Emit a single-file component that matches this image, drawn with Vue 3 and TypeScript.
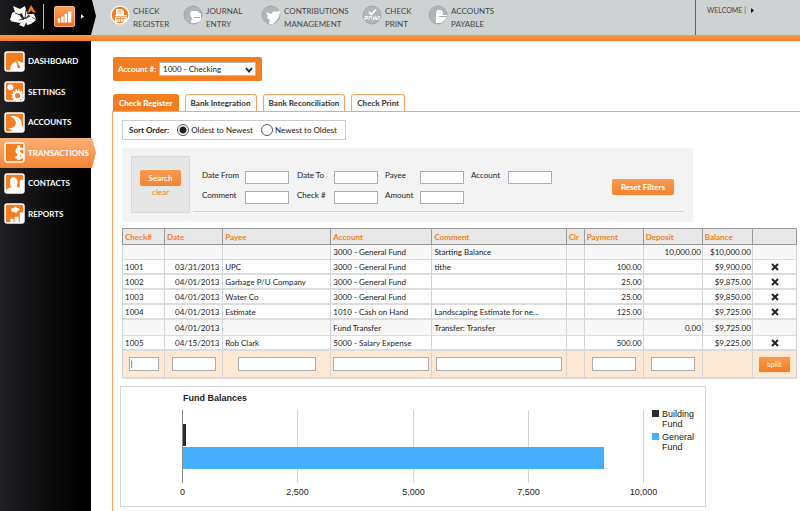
<script setup lang="ts">
import { ref } from 'vue'

interface Row {
  check: string
  date: string
  payee: string
  account: string
  comment: string
  payment: string
  deposit: string
  balance: string
  removable: boolean
}

const topNav: { icon: string; lines: [string, string] }[] = [
  { icon: 'register', lines: ['CHECK', 'REGISTER'] },
  { icon: 'journal', lines: ['JOURNAL', 'ENTRY'] },
  { icon: 'dove', lines: ['CONTRIBUTIONS', 'MANAGEMENT'] },
  { icon: 'print', lines: ['CHECK', 'PRINT'] },
  { icon: 'payable', lines: ['ACCOUNTS', 'PAYABLE'] },
]

const sideNav = [
  { icon: 'gauge', label: 'DASHBOARD' },
  { icon: 'gear', label: 'SETTINGS' },
  { icon: 'wrench', label: 'ACCOUNTS' },
  { icon: 'dollar', label: 'TRANSACTIONS' },
  { icon: 'people', label: 'CONTACTS' },
  { icon: 'reports', label: 'REPORTS' },
]

const tabs = ['Check Register', 'Bank Integration', 'Bank Reconciliation', 'Check Print']
const filters = ['Date From', 'Date To', 'Payee', 'Account', 'Comment', 'Check #', 'Amount']
const sortOrder = ref('oldest')

const columns = [
  { label: 'Check#', width: 43, field: 'w30' },
  { label: 'Date', width: 58, field: 'w43' },
  { label: 'Payee', width: 108, field: 'w77' },
  { label: 'Account', width: 101, field: 'w95' },
  { label: 'Comment', width: 134, field: 'w126' },
  { label: 'Clr', width: 18, field: '' },
  { label: 'Payment', width: 59, field: 'w43' },
  { label: 'Deposit', width: 59, field: 'w43' },
  { label: 'Balance', width: 50, field: '' },
]

function row(check: string, date: string, payee: string, account: string, comment: string, payment: string, deposit: string, balance: string): Row {
  return { check, date, payee, account, comment, payment, deposit, balance, removable: check !== '' }
}

const rows: Row[] = [
  row('', '', '', '3000 - General Fund', 'Starting Balance', '', '10,000.00', '$10,000.00'),
  row('1001', '03/31/2013', 'UPC', '3000 - General Fund', 'tithe', '100.00', '', '$9,900.00'),
  row('1002', '04/01/2013', 'Garbage P/U Company', '3000 - General Fund', '', '25.00', '', '$9,875.00'),
  row('1003', '04/01/2013', 'Water Co', '3000 - General Fund', '', '25.00', '', '$9,850.00'),
  row('1004', '04/01/2013', 'Estimate', '1010 - Cash on Hand', 'Landscaping Estimate for ne...', '125.00', '', '$9,725.00'),
  row('', '04/01/2013', '', 'Fund Transfer', 'Transfer: Transfer', '', '0.00', '$9,725.00'),
  row('1005', '04/15/2013', 'Rob Clark', '5000 - Salary Expense', '', '500.00', '', '$9,225.00'),
]

const ticks = [0, 2500, 5000, 7500, 10000]
const tickX = (v: number) => Math.round(62 + (v / 10000) * 461) + 0.5
</script>

<template>
  <div class="page">
    <header class="top">
      <div class="brand">
        <svg class="logo" viewBox="0 0 28 24" aria-label="Logo">
          <path d="M4 2l7 3 5-3 1 4-6 4-5-2zM3 9l4-2 4 4-1 4-5 2-4-1zM1 17l7-2 3-4 4 5-4 3zM10 21l5-6 4-1-4 9zM16 14l5-2 6 4-5 4-4 1zM18 10l7 0 2 5-6-3zM12 8l5-2 2 6-4 2z" fill="#fff" />
          <path d="M6 9l5 2 3 5M17 6l-1 9 5-3M10 16l5-1" fill="none" stroke="#111" stroke-width=".8" />
          <path d="M18 9l4-8 5 8-3-1-2-2-1 2z" fill="#f47d20" />
        </svg>
        <span class="brand-line"></span>
        <button class="chart-btn" aria-label="Charts">
          <svg viewBox="0 0 20 20">
            <path d="M2 12h3v5H2zM6 10h3v7H6zM10 7h3v10h-3zM14 4h4v13h-4z" fill="#fff" />
          </svg>
        </button>
        <svg class="brand-arrow" viewBox="0 0 4 6"><path d="M0 0l4 3-4 3z" fill="#fff" /></svg>
      </div>
      <nav class="top-nav">
        <a v-for="n in topNav" :key="n.icon" href="#">
          <svg viewBox="0 0 20 20">
            <template v-if="n.icon === 'register'">
              <circle cx="10" cy="10" r="9.5" fill="#fff" />
              <circle cx="10" cy="10" r="8.3" fill="#f47d20" />
              <path d="M6 10V4h5l3 2v4h3v7H5v-7z" fill="#fff" />
              <path d="M7.500 6h4M7.500 8h5M5 11.500h12M6 13.500h10M8 12v5M10.500 12v5M13 12v5" stroke="#f47d20" stroke-width=".7" />
            </template>
            <template v-else>
              <circle cx="10" cy="10" r="9" fill="#b2b5b6" stroke="#a4a7a9" />
              <template v-if="n.icon === 'journal'">
                <path d="M8 6h6l4 3v6a9 9 0 0 1-6 3H8l1-5-2-3z" fill="#fff" />
                <path d="M11 12.500h6" stroke="#aaa" />
              </template>
              <path v-if="n.icon === 'dove'" d="M5 7l5 2 3-3 2 1 4-1-1 6-3 4-3 3H8l1-4-3-2 1-2z" fill="#fff" />
              <template v-if="n.icon === 'print'">
                <path d="M7 7l2.500 2.500L14 4.500" stroke="#fff" stroke-width="1.800" fill="none" />
                <path d="M3 15v-3.500h2.500v2H3M7 15v-3.500h2.500v2L10 15M11.500 11.500V15M13 15v-3.500l2 3.500v-3.500M16 11.500h2M17 11.500V15" stroke="#fff" fill="none" stroke-width=".9" />
              </template>
              <template v-if="n.icon === 'payable'">
                <path d="M9 5h4l2 2v3h4l-1 4-5 4H8V9z" fill="#fff" />
                <path d="M11 11.500h8" stroke="#aaa" />
              </template>
            </template>
          </svg>
          <span>{{ n.lines[0] }}<br />{{ n.lines[1] }}</span>
        </a>
      </nav>
      <div class="welcome">WELCOME | <svg viewBox="0 0 3 5"><path d="M0 0l3 2.500L0 5z" /></svg></div>
    </header>

    <div class="body">
      <aside>
        <ul>
          <li v-for="s in sideNav" :key="s.label">
            <a href="#" :class="{ active: s.icon === 'dollar' }">
              <svg viewBox="0 0 20 20">
                <rect x="1" y="1" width="18" height="18" rx="2" fill="#f47d20" />
                <template v-if="s.icon === 'gauge'">
                  <path d="M6 19c-1-6 4-10 9-9l4 2v7z" fill="#fff" />
                  <path d="M12 10l2 5" stroke="#f47d20" stroke-width="1.500" />
                  <circle cx="14" cy="15" r="1.500" fill="#f47d20" />
                </template>
                <template v-if="s.icon === 'gear'">
                  <circle cx="6" cy="6" r="2.800" fill="#fff" />
                  <circle cx="13" cy="14" r="5" fill="none" stroke="#fff" stroke-width="2" stroke-dasharray="1.500 1.100" />
                  <circle cx="13" cy="14" r="3.500" fill="none" stroke="#fff" stroke-width="2" />
                </template>
                <path v-if="s.icon === 'wrench'" d="M6 4c6-1 11 2 11 8l2 7H9l-5-4c3 1 6 0 7-3s-1-6-5-8z" fill="#fff" />
                <path v-if="s.icon === 'dollar'" d="M18 7c-6-3-8 3-3 4s3 6-4 3M14 3v14" stroke="#fff" stroke-width="2.600" fill="none" />
                <path v-if="s.icon === 'people'" d="M2 19v-3l5-3c-2-3-2-9 2-9s5 5 3 9l3 1V8c0-2 3-2 4-1v12z" fill="#fff" />
                <path v-if="s.icon === 'reports'" d="M6 19v-4h3v4zM10 19v-6h4v6zM15 19V9h4v10zM7 8V5h3V3l5 3-4 4V9z" fill="#fff" />
                <rect x="1" y="1" width="18" height="18" rx="2" fill="none" stroke="#fff" stroke-width="1.500" />
              </svg>
              {{ s.label }}
            </a>
          </li>
        </ul>
      </aside>

      <main>
        <div class="account">
          <label for="account">Account #:</label>
          <span class="select">
            <select id="account"><option>1000 - Checking</option></select>
            <svg viewBox="0 0 8 6"><path d="M1 1l3 3.500L7 1" fill="none" stroke="#222" stroke-width="1.800" /></svg>
          </span>
        </div>

        <div class="tabs">
          <button v-for="(t, i) in tabs" :key="t" :class="{ current: i === 0 }">{{ t }}</button>
        </div>

        <section class="panel">
          <div class="sort">
            <b>Sort Order:</b>
            <label><input v-model="sortOrder" type="radio" name="sort" value="oldest" />Oldest to Newest</label>
            <label><input v-model="sortOrder" type="radio" name="sort" value="newest" />Newest to Oldest</label>
          </div>

          <form class="filters" @submit.prevent>
            <div class="search">
              <button class="btn">Search</button>
              <a href="#">clear</a>
            </div>
            <div class="criteria">
              <div class="fields">
                <template v-for="(f, i) in filters" :key="f">
                  <label :for="'filter' + i">{{ f }}</label>
                  <input :id="'filter' + i" type="text" />
                </template>
              </div>
              <button type="reset" class="btn">Reset Filters</button>
            </div>
          </form>

          <table>
            <colgroup>
              <col v-for="c in columns" :key="c.label" :style="{ width: c.width + 'px' }" />
              <col class="actions" />
            </colgroup>
            <thead>
              <tr>
                <th v-for="c in columns" :key="c.label">{{ c.label }}</th>
                <th></th>
              </tr>
            </thead>
            <tbody>
              <tr v-for="(r, i) in rows" :key="i" :class="{ muted: !r.removable }">
                <td>{{ r.check }}</td>
                <td class="date">{{ r.date }}</td>
                <td>{{ r.payee }}</td>
                <td>{{ r.account }}</td>
                <td>{{ r.comment }}</td>
                <td></td>
                <td class="num">{{ r.payment }}</td>
                <td class="num">{{ r.deposit }}</td>
                <td class="num">{{ r.balance }}</td>
                <td class="act">
                  <button v-if="r.removable" class="remove" aria-label="Delete">
                    <svg viewBox="0 0 8 8"><path d="M1 1l6 6M7 1L1 7" stroke="#222" stroke-width="2" /></svg>
                  </button>
                </td>
              </tr>
              <tr class="entry">
                <td v-for="c in columns" :key="c.label">
                  <input v-if="c.field" type="text" :class="c.field" :aria-label="c.label" :value="c.label === 'Check#' ? '|' : ''" />
                </td>
                <td><button class="split">split</button></td>
              </tr>
            </tbody>
          </table>

          <svg class="chart" viewBox="0 0 586 121" role="img" aria-label="Fund Balances">
            <rect x=".5" y=".5" width="585" height="120" fill="#fff" stroke="#d5d5d5" />
            <text x="63" y="15" class="title">Fund Balances</text>
            <g v-for="t in ticks" :key="t">
              <path :d="`M${tickX(t)} 24V97`" :stroke="t ? '#d4d4d4' : '#888'" />
              <text :x="tickX(t)" y="109" text-anchor="middle">{{ t.toLocaleString('en-US') }}</text>
            </g>
            <rect x="63" y="38" width="3" height="22" fill="#2b2b2d" />
            <rect x="63" y="61" width="421" height="22" fill="#45aeff" />
            <rect x="532" y="24" width="7" height="7" fill="#2b2b2d" />
            <text x="542" y="31">Building</text>
            <text x="542" y="41">Fund</text>
            <rect x="532" y="47" width="7" height="7" fill="#45aeff" />
            <text x="542" y="54">General</text>
            <text x="542" y="64">Fund</text>
          </svg>
        </section>
      </main>
    </div>
  </div>
</template>

<style>
body { background: #fff; }
</style>

<style scoped>
* { box-sizing: border-box; }
.page {
  min-height: 100vh;
  display: flex;
  flex-direction: column;
  font: 8px/10px Lato, "Open Sans", sans-serif;
  color: #222;
}
a { color: inherit; text-decoration: none; }
button, input, select { font: inherit; color: inherit; margin: 0; padding: 0; }
button { border: 0; cursor: pointer; }
input[type="text"] { background: #fff; border: 1px solid #a9adb3; border-radius: 0; }

.top {
  display: flex;
  height: 41px;
  background: linear-gradient(#f99a50, #f47d20) bottom / 100% 6px no-repeat #ced2d3;
  padding-bottom: 6px;
}
.brand {
  width: 96px;
  display: flex;
  align-items: center;
  padding: 0 0 3px 9px;
  background: linear-gradient(90deg, #1d1d20, #000 60%);
  clip-path: polygon(0 0, 92px 0, 96px 16px, 91px 35px, 0 35px);
}
.logo { width: 28px; height: 24px; }
.brand-line { width: 1px; height: 25px; margin: 0 10px 0 6px; background: #bbb; }
.chart-btn {
  width: 21px;
  height: 21px;
  padding: 1px;
  border: 1px solid #ffb47c;
  border-radius: 2px;
  background: linear-gradient(#f9a15d, #f0701a);
}
.chart-btn svg { display: block; }
.brand-arrow { width: 3px; height: 5px; margin-left: 6px; }
.top-nav {
  flex: 1;
  display: grid;
  grid-template-columns: 73px 78px 101px 66px 80px;
  padding: 5px 0 0 14px;
  line-height: 13px;
  color: #44474a;
  white-space: nowrap;
}
.top-nav a { display: flex; align-items: flex-start; gap: 3px; }
.top-nav svg { width: 20px; height: 20px; }
.welcome {
  width: 105px;
  border-left: 1px solid #666;
  padding: 5px 0 0 11px;
  font-size: 7px;
  color: #444;
}
.welcome svg { width: 3px; height: 5px; margin-left: 3px; fill: #111; }

.body { flex: 1; display: flex; }
aside { width: 91px; padding-top: 5px; background: linear-gradient(90deg, #1f1f22, #000 90%); }
aside ul {
  height: 183px;
  margin: 0;
  padding: 0;
  list-style: none;
  display: flex;
  flex-direction: column;
}
aside li { flex: 1; display: flex; }
aside a {
  flex: 1;
  display: flex;
  align-items: center;
  gap: 3px;
  padding-left: 4px;
  color: #fff;
  font-weight: 700;
}
aside a svg { width: 21px; height: 21px; }
aside a.active {
  flex: none;
  width: 96px;
  position: relative;
  background: linear-gradient(#fbb077, #f58434);
  clip-path: polygon(0 0, 92px 0, 96px 50%, 92px 100%, 0 100%);
}

main { flex: 1; min-width: 0; padding: 16px 0 0 22px; display: flex; flex-direction: column; align-items: flex-start; }
.account {
  display: flex;
  align-items: center;
  gap: 4px;
  height: 24px;
  padding: 0 6px 0 5px;
  border-radius: 2px;
  background: #f47d20;
  color: #fff;
  font-weight: 700;
}
.account label { width: 37px; white-space: nowrap; }
.select { position: relative; display: flex; }
.select select {
  width: 97px;
  height: 14px;
  padding-left: 3px;
  border: 1px solid #b5bcc4;
  background: #fff;
  appearance: none;
  color: #222;
  font-weight: 400;
}
.select svg { position: absolute; right: 3px; top: 5px; width: 8px; height: 6px; pointer-events: none; }

.tabs { display: flex; gap: 6px; margin-top: 13px; }
.tabs button {
  height: 17px;
  padding: 0 5px;
  border: 1px solid #f8a468;
  border-bottom: 0;
  border-radius: 3px 3px 0 0;
  background: #fff;
  font-weight: 900;
  color: #444;
}
.tabs .current { background: #f47d20; border-color: #f47d20; color: #fff; }

.panel {
  flex: 1;
  align-self: stretch;
  margin-left: -1px;
  padding: 8px 3px 4px 9px;
  border-top: 1px solid #f8a468;
  border-left: 1px solid #f8a468;
}
.sort {
  display: flex;
  align-items: center;
  width: 224px;
  height: 20px;
  padding-left: 6px;
  border: 1px solid #ccc;
}
.sort b { width: 50px; }
.sort label { display: flex; align-items: center; gap: 2px; width: 87px; white-space: nowrap; }
.sort input {
  appearance: none;
  width: 12px;
  height: 12px;
  border: 1px solid #555;
  border-radius: 50%;
  background: #fff;
}
.sort input:checked { background: radial-gradient(circle, #222 3px, #fff 4px); }

.filters {
  display: flex;
  gap: 3px;
  max-width: 571px;
  height: 74px;
  margin-top: 8px;
  padding: 8px 9px;
  background: #f3f3f3;
}
.search {
  width: 59px;
  height: 57px;
  display: flex;
  flex-direction: column;
  align-items: center;
  gap: 1px;
  padding-top: 13px;
  border: 1px solid #d8d8d8;
  background: #e6e6e6;
  color: #f47d20;
}
.btn {
  height: 16px;
  padding: 0 9px;
  border-radius: 2px;
  background: linear-gradient(#f89a50, #f5832e);
  color: #fff;
  font-weight: 700;
}
.criteria {
  flex: 1;
  display: flex;
  align-items: flex-start;
  justify-content: space-between;
  height: 56px;
  padding: 15px 10px 0 9px;
  border-bottom: 1px solid #d4d4d4;
}
.criteria .btn { margin-top: 8px; }
.fields {
  display: grid;
  grid-template-columns: 43px 52px 37px 51px 35px 51px 37px 44px;
  row-gap: 7px;
}
.fields label { line-height: 9px; white-space: nowrap; }
.fields input { width: 44px; height: 13px; }

table { width: 100%; margin-top: 6px; border-collapse: separate; border-spacing: 0; table-layout: fixed; }
.actions { width: 44px; }
th {
  height: 17px;
  padding: 0 2px;
  background: #e8e8e8;
  border: 1px solid #999;
  border-left: 0;
  color: #f47d20;
  text-align: left;
  font-weight: 700;
}
th:first-child { border-left: 1px solid #999; }
td {
  height: 15px;
  padding: 0 2px;
  border-right: 1px solid #d4d4d4;
  border-bottom: 2px solid #dcdcdc;
  white-space: nowrap;
}
td:first-child { border-left: 1px solid #d4d4d4; }
.muted td { height: 16px; background: #f7f7f7; border-bottom-width: 1px; }
.muted:first-child td { height: 15px; }
.date { padding-left: 10px; }
.num { text-align: right; padding-right: 1px; }
.act { padding-left: 4px; }
.remove { display: block; margin: 0 auto; width: 8px; height: 8px; background: none; }
.remove svg { display: block; width: 8px; height: 8px; }
.entry td { height: 28px; background: #fde8d3; text-align: center; }
.entry input { display: block; height: 14px; margin: 0 auto; padding: 0 1px; max-width: 100%; }
.w30 { width: 30px; }
.w43 { width: 44px; }
.w77 { width: 78px; }
.w95 { width: 96px; }
.w126 { width: 126px; }
.split { width: 31px; height: 15px; background: linear-gradient(#f89a50, #f47d20); color: #fff; }

.chart { display: block; width: 100%; max-width: 586px; margin: 7px 0 0 -2px; font: 9px "Liberation Sans", Arial, sans-serif; fill: #222; }
.chart .title { font-weight: 700; }
</style>
